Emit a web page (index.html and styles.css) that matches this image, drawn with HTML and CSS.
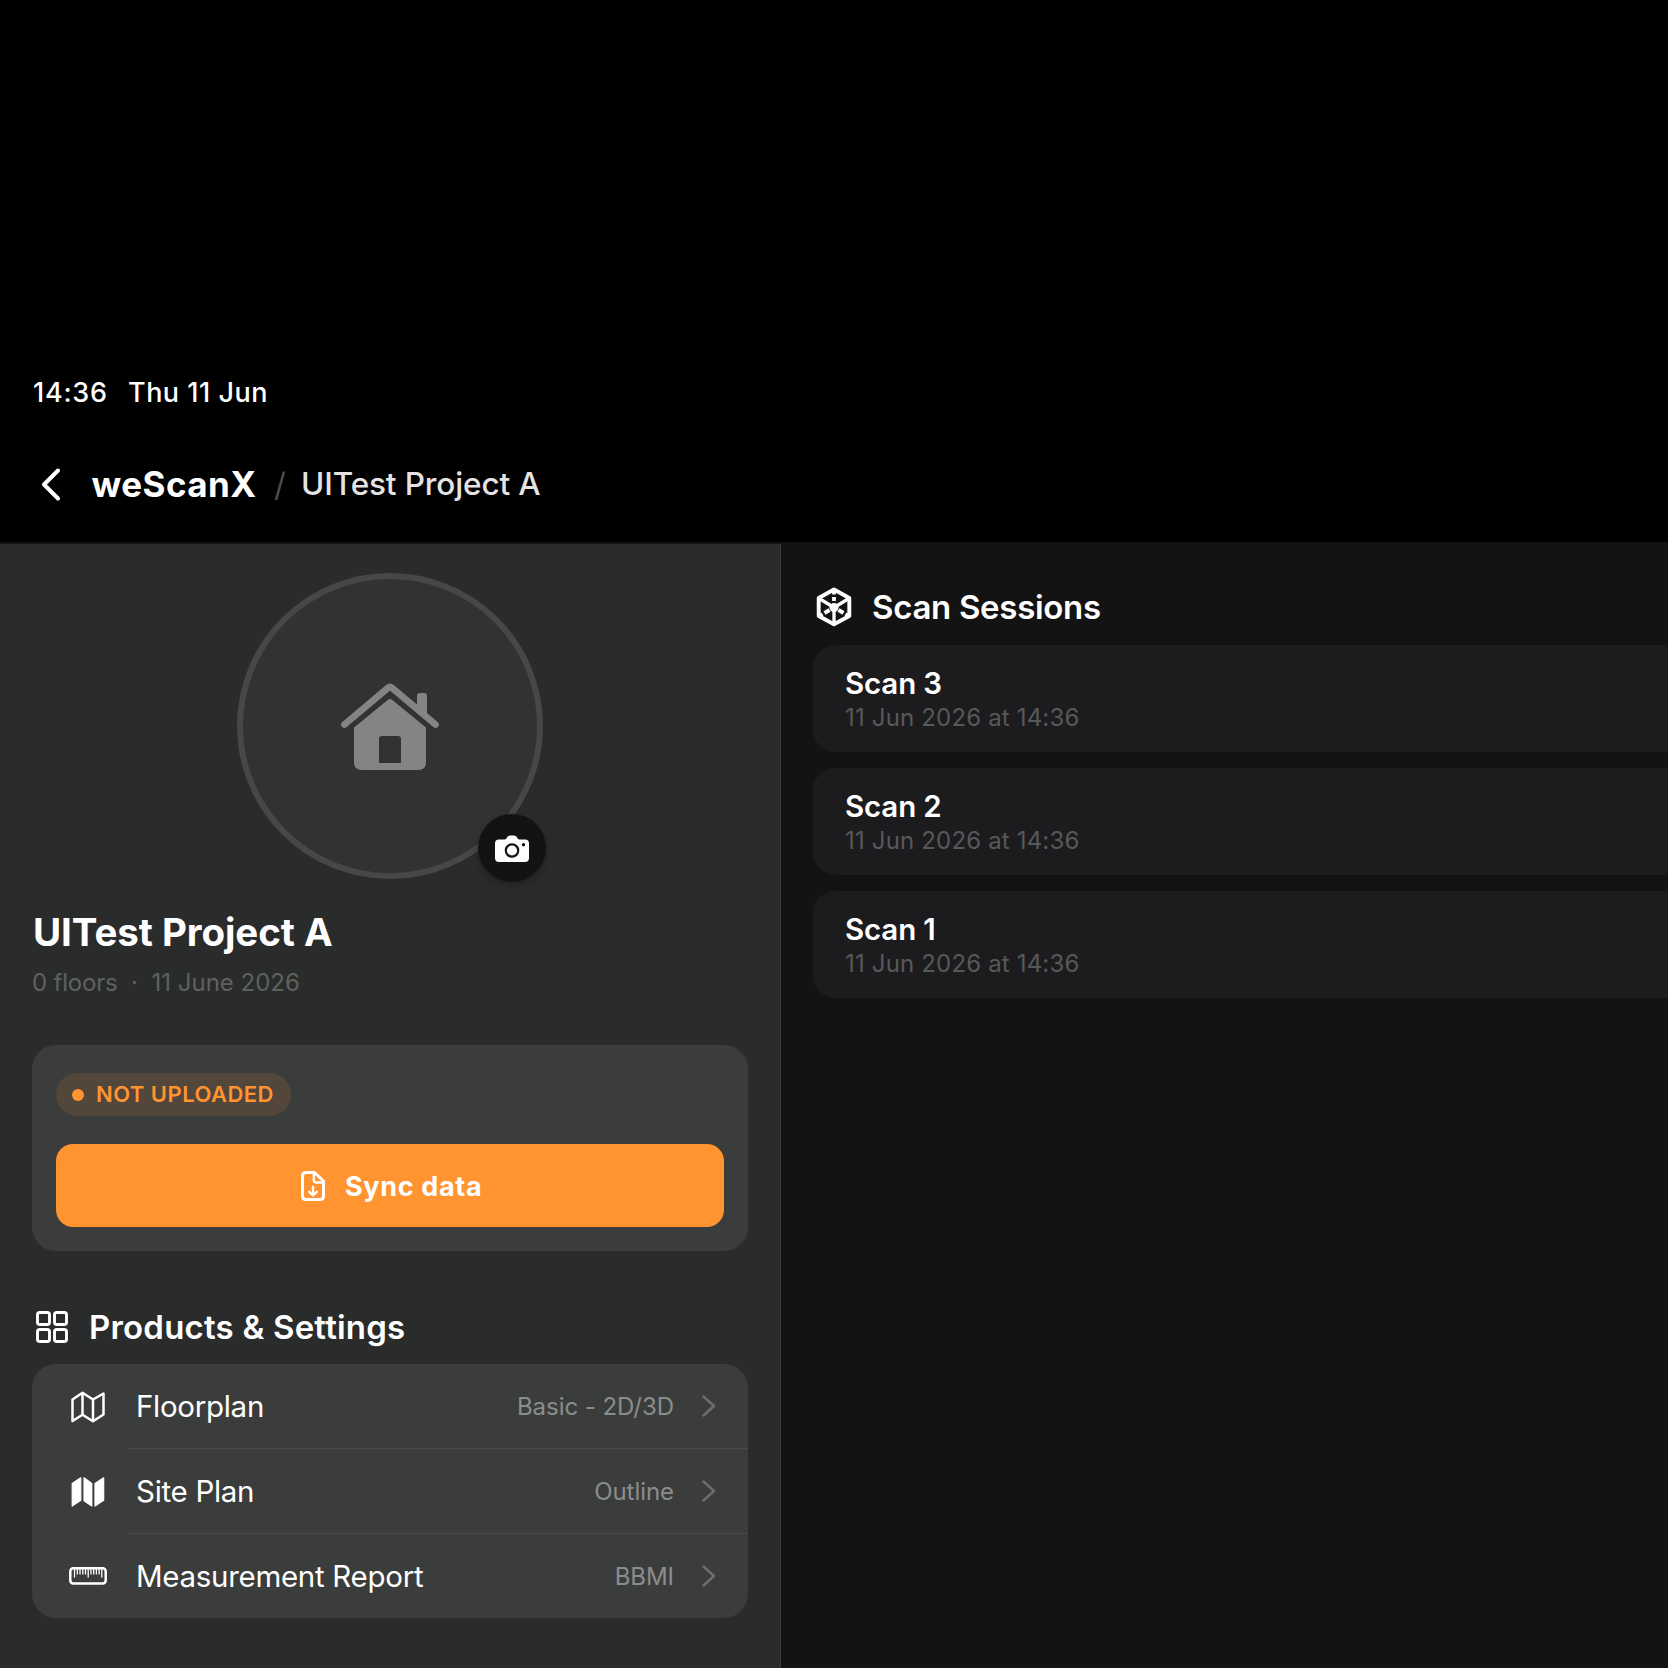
FILE: index.html
```html
<!DOCTYPE html>
<html lang="en">
<head>
<meta charset="utf-8">
<title>weScanX</title>
<link rel="stylesheet" href="styles.css">
</head>
<body>
<div class="status"><span class="clock">14:36</span><span class="day">Thu 11 Jun</span></div>
<header class="topbar">
  <svg class="back" width="24" height="36" viewBox="0 0 24 36"><path d="M19 4.500 5 18.500l14 14" fill="none" stroke="#fff" stroke-width="4" stroke-linecap="round" stroke-linejoin="round"/></svg>
  <span class="brand">weScanX</span>
  <svg class="slash" width="12" height="32" viewBox="0 0 12 32"><path d="M10 1.500 2 30" stroke="#4c4c4c" stroke-width="2.600"/></svg>
  <span class="crumb">UITest Project A</span>
</header>
<div class="columns">
  <aside class="sidebar">
    <div class="avatar">
      <svg class="house" width="100" height="90" viewBox="0 0 100 90" fill="#848484">
        <path d="M4.500 42.500 48 5.800q2-1.600 4 0L95.500 42.500" fill="none" stroke="#848484" stroke-width="6.800" stroke-linecap="round"/>
        <path d="M77 14q0-3 3-3h4q3 0 3 3v21L77 27z"/>
        <path fill-rule="evenodd" d="M14 45.500 48 17.800q2-1.500 4 0L86 45.500V80q0 8-8 8H22q-8 0-8-8zM39 81h22V57q0-3-3-3H42q-3 0-3 3z"/>
      </svg>
      <div class="camera">
        <svg width="34" height="28" viewBox="0 0 34 28"><path d="M4 4.500h5.500q1 0 2-1.300l.8-1.200Q13 .5 15 .5h4q2 0 2.800 1.500l.7 1.200q.8 1.300 2 1.300H30q4 0 4 4V23q0 4-4 4H4q-4 0-4-4V8.500q0-4 4-4z" fill="#fff"/><circle cx="17" cy="15.500" r="6.200" fill="none" stroke="#131313" stroke-width="2.200"/><circle cx="28.500" cy="9.800" r="1.700" fill="#131313"/></svg>
      </div>
    </div>
    <h1 class="title">UITest Project A</h1>
    <p class="meta"><span class="floors">0 floors</span><span class="mid">·</span><span>11 June 2026</span></p>
    <section class="card sync">
      <div class="pill"><i class="dot"></i><span>NOT UPLOADED</span></div>
      <div class="button">
        <svg width="24" height="30" viewBox="0 0 24 30" fill="none" stroke="#fff" stroke-linejoin="round" stroke-linecap="round"><path d="M5 1.500h8.500L22.500 10v15q0 3.500-3.500 3.500H5Q1.500 28.500 1.500 25V5Q1.500 1.500 5 1.500z" stroke-width="3"/><path d="M12.800 2.500V9q0 2.500 2.500 2.500h7" stroke-width="2.300"/><path d="M12 16v8M8.200 20.800l3.800 3.700 3.800-3.700" stroke-width="2.400"/></svg>
        <span>Sync data</span>
      </div>
    </section>
    <h2 class="heading products">
      <svg width="32" height="32" viewBox="0 0 32 32" fill="none" stroke="#fff" stroke-width="2.900"><rect x="1.500" y="1.500" width="12" height="12" rx="2.300"/><rect x="18.500" y="1.500" width="12" height="12" rx="2.300"/><rect x="1.500" y="18.500" width="12" height="12" rx="2.300"/><rect x="18.500" y="18.500" width="12" height="12" rx="2.300"/></svg>
      <span>Products &amp; Settings</span>
    </h2>
    <section class="card list">
      <div class="row">
        <span class="icon"><svg width="34" height="32" viewBox="0 0 34 32" fill="none" stroke="#fff" stroke-width="2.500" stroke-linejoin="round"><path d="M1.500 8.500 11.500 1.700 22 8.500 32.500 2.500V23.500L22 30.300 11.500 23.800 1.500 30z"/><path d="M11.500 1.700v22.100M22 8.500v21.800"/></svg></span>
        <div class="line"><span class="name">Floorplan</span><span class="value">Basic - 2D/3D</span><svg class="chev" width="14" height="22" viewBox="0 0 14 22"><path d="m1.500 1.500 10.500 9.500-10.500 9.500"/></svg></div>
      </div>
      <div class="row">
        <span class="icon"><svg width="34" height="32" viewBox="0 0 34 32" fill="#fff" stroke="#fff" stroke-width="1.200" stroke-linejoin="round"><path d="M1.200 7.500 9.800 1.800V24.300L1.200 30zM13 1.800 20.800 7.500V30L13 24.800zM24 7.500 32.700 1.800V24.300L24 30z"/></svg></span>
        <div class="line"><span class="name">Site Plan</span><span class="value">Outline</span><svg class="chev" width="14" height="22" viewBox="0 0 14 22"><path d="m1.500 1.500 10.500 9.500-10.500 9.500"/></svg></div>
      </div>
      <div class="row last">
        <span class="icon"><svg width="38" height="18" viewBox="0 0 38 18" fill="none" stroke="#fff"><rect x="1.300" y="1.300" width="35.400" height="15.200" rx="3" stroke-width="2.500"/><path d="M5.500 2v8.500M19.200 2v8.500M32.800 2v8.500M8.300 2v5.500M11 2v5.500M13.800 2v5.500M16.500 2v5.500M22 2v5.500M24.700 2v5.500M27.400 2v5.500M30.100 2v5.500" stroke-width="1.300"/></svg></span>
        <div class="line"><span class="name">Measurement Report</span><span class="value">BBMI</span><svg class="chev" width="14" height="22" viewBox="0 0 14 22"><path d="m1.500 1.500 10.500 9.500-10.500 9.500"/></svg></div>
      </div>
    </section>
  </aside>
  <main class="sessions">
    <h2 class="heading scans">
      <svg width="36" height="40" viewBox="0 0 36 40" fill="none" stroke="#fff" stroke-linejoin="round"><path d="M18 2.500 33.300 11v18L18 37.300 2.700 29V11z" stroke-width="3.900"/><path d="M4 12l14 8.500L32 12M18 20.500V37" stroke-width="3.300"/><path d="M18 3v4.500M18 10v4M13.500 23 8.500 26M22.500 23l5 3M6.500 27.200 4 28.700M29.500 27.200l2.500 1.500" stroke-width="3.800"/><circle cx="18" cy="20.500" r="4.600" fill="#fff" stroke="none"/></svg>
      <span>Scan Sessions</span>
    </h2>
    <article class="scan"><strong>Scan 3</strong><time>11 Jun 2026 at 14:36</time></article>
    <article class="scan"><strong>Scan 2</strong><time>11 Jun 2026 at 14:36</time></article>
    <article class="scan"><strong>Scan 1</strong><time>11 Jun 2026 at 14:36</time></article>
  </main>
</div>
</body>
</html>
```

FILE: styles.css
```css
* { box-sizing: border-box; }
body {
  margin: 0;
  height: 1668px;
  overflow: hidden;
  display: flex;
  flex-direction: column;
  background: #000;
  color: #fff;
  font-family: Inter, "Liberation Sans", sans-serif;
  white-space: nowrap;
}
h1, h2, p { margin: 0; }
svg { display: block; flex: none; }
.status {
  height: 424px;
  padding: 373px 0 0 33px;
  display: flex;
  font-size: 27px;
  line-height: 40px;
  font-weight: 500;
}
.clock { width: 95px; letter-spacing: .75px; }
.day { letter-spacing: .5px; }
.topbar {
  height: 120px;
  display: flex;
  align-items: center;
  padding: 2px 0 0 39px;
  border-bottom: 2px solid #131313;
}
.brand { margin-left: 28.500px; width: 182.500px; font-size: 35px; font-weight: 700; line-height: 40px; letter-spacing: .45px; }
.slash { margin-top: 3px; }
.crumb { margin-left: 15px; font-size: 31.500px; line-height: 40px; font-weight: 450; letter-spacing: -.12px; color: #e5e3e3; }
.columns { flex: 1; display: flex; }
.sidebar {
  width: 781px;
  flex: none;
  padding: 29px 32px 0;
  background: #2a2c2b;
  border-right: 1px solid #3a3c3b;
  display: flex;
  flex-direction: column;
}
.avatar {
  position: relative;
  width: 306px;
  height: 306px;
  margin: 0 auto;
  border: 6px solid #464747;
  border-radius: 50%;
  background: #323232;
  display: flex;
  align-items: center;
  justify-content: center;
}
.house { margin-top: 2px; }
.camera {
  position: absolute;
  right: -9px;
  bottom: -9px;
  width: 68px;
  height: 68px;
  padding-top: 2px;
  border-radius: 50%;
  background: #131313;
  box-shadow: 0 3px 8px rgba(0, 0, 0, .25);
  display: flex;
  align-items: center;
  justify-content: center;
}
.title { margin: 28px 0 0 1px; font-size: 38.500px; line-height: 50px; font-weight: 700; letter-spacing: -.07px; }
.meta { display: flex; margin-top: 11px; font-size: 24px; line-height: 30px; color: #5f6160; }
.floors { letter-spacing: -.2px; }
.mid { width: 34px; text-align: center; }
.card { width: 716px; border-radius: 24px; background: #3b3d3c; flex: none; }
.sync { margin-top: 47px; height: 206px; padding: 28px 24px 24px; }
.pill {
  width: 235px;
  height: 43px;
  border-radius: 22px;
  background: #53463a;
  display: flex;
  align-items: center;
  padding: 0 0 1px 16px;
  gap: 12px;
  color: #ff9430;
  font-size: 22px;
  font-weight: 600;
  letter-spacing: .47px;
}
.dot { width: 12px; height: 12px; margin-top: 1px; border-radius: 50%; background: #ff9430; }
.button {
  margin-top: 28px;
  height: 83px;
  border-radius: 17px;
  background: #ff9430;
  display: flex;
  align-items: center;
  padding-left: 245px;
  gap: 20px;
  font-size: 27px;
  font-weight: 700;
  letter-spacing: .65px;
}
.button span { margin-top: 2px; }
.heading { display: flex; align-items: center; height: 40px; font-size: 33px; font-weight: 600; }
.products { margin-top: 56px; padding-left: 4px; gap: 21px; letter-spacing: .2px; }
.list { margin-top: 17px; height: 254px; overflow: hidden; }
.row { display: flex; height: 85px; }
.row.last { height: 84px; }
.icon { width: 96px; padding-left: 15px; display: flex; align-items: center; justify-content: center; }
.line { flex: 1; display: flex; align-items: center; padding: 0 32px 0 8px; border-bottom: 1px solid #494a49; }
.row.last .line { border-bottom: 0; }
.name { font-size: 29.500px; letter-spacing: -.3px; }
.value { margin-left: auto; font-size: 24px; letter-spacing: -.05px; color: #8b8d8c; }
.chev { margin-left: 28px; fill: none; stroke: #6c6e6d; stroke-width: 2.400; stroke-linecap: round; stroke-linejoin: round; }
.sessions { flex: 1; min-width: 0; padding: 43px 0 0 32px; background: #131313; }
.scans { padding-left: 3px; gap: 20px; margin-bottom: 18px; letter-spacing: -.3px; }
.scan {
  height: 107px;
  margin-bottom: 16px;
  border-radius: 22px 0 0 22px;
  background: #1c1c1e;
  padding: 18px 0 0 32px;
  display: flex;
  flex-direction: column;
}
.scan strong { font-size: 29.500px; line-height: 40px; font-weight: 600; letter-spacing: -.15px; }
.scan time { font-size: 24px; line-height: 30px; letter-spacing: .17px; color: #58585a; }
```
